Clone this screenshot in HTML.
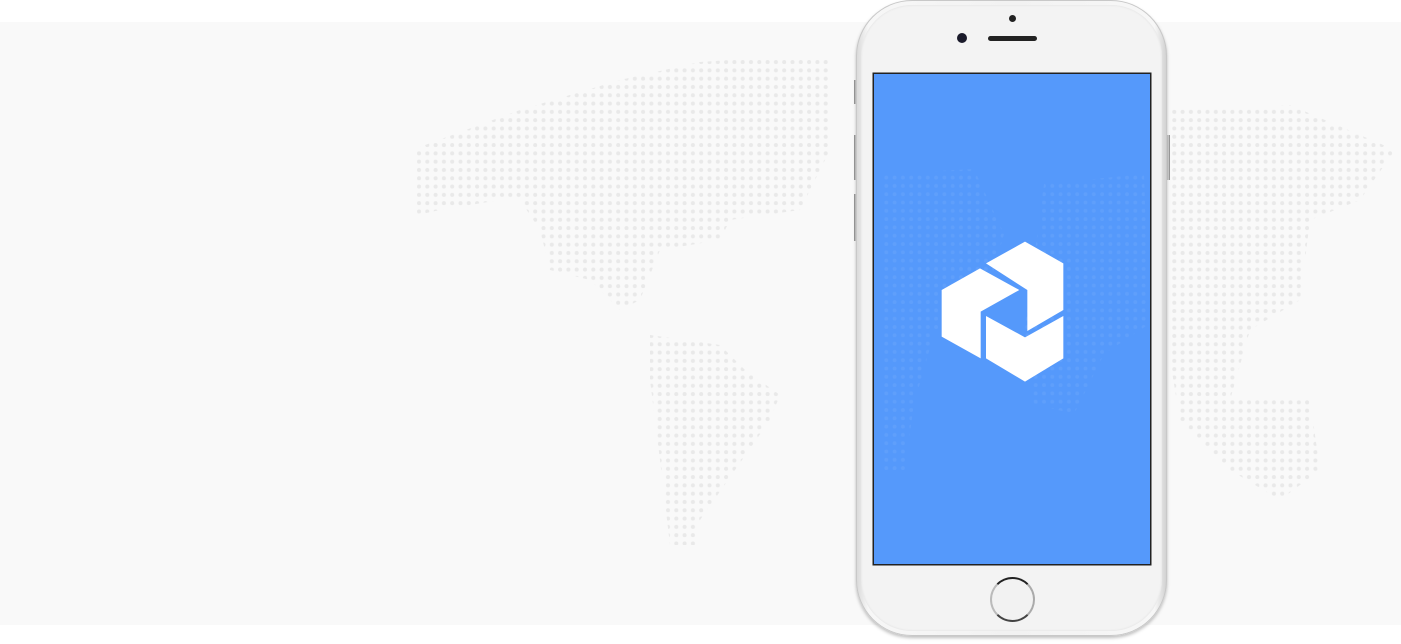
<!DOCTYPE html>
<html><head><style>
html,body{margin:0;padding:0;width:1401px;height:644px;overflow:hidden;background:#fff;font-family:"Liberation Sans",sans-serif}
.band{position:absolute;left:0;top:22px;width:1401px;height:603px;background:#f9f9f9}
.phone{position:absolute;left:856px;top:0;width:311px;height:636px;border-radius:56px;background:linear-gradient(90deg,#d8d8d8,#f7f7f7 4%,#f2f2f2 50%,#f7f7f7 96%,#cfcfcf);box-shadow:0 2px 3px rgba(0,0,0,.25),inset 0 0 0 1px #c8c8c8}
.inner{position:absolute;left:5px;top:5px;right:5px;bottom:5px;border-radius:51px;background:#f3f3f3;box-shadow:inset 0 0 2px #ddd}
.screen{position:absolute;left:874px;top:74px;width:276px;height:490px;background:#5599fb;box-shadow:0 0 0 1.5px #222}
.btn{position:absolute;width:3px;background:#ccc;border-left:1px solid #999}
.home{position:absolute;left:990px;top:577px;width:45px;height:45px;border-radius:50%;border:2px solid #444;border-top-color:#222;border-left-color:#bbb;border-right-color:#aaa;box-sizing:border-box;background:#f2f2f2}
</style></head><body>
<div class="band"></div>
<svg style="position:absolute;left:0;top:0" width="1401" height="644">
<defs>
<pattern id="d" width="8.3" height="8.3" patternUnits="userSpaceOnUse"><circle cx="4" cy="4" r="2" fill="#e9e9e9"/></pattern>
<pattern id="d2" width="8.3" height="8.3" patternUnits="userSpaceOnUse"><circle cx="4" cy="4" r="1.9" fill="#5f9ffb"/></pattern>
</defs>
<polygon fill="url(#d)" points="417,148 520,110 620,80 700,62 790,56 830,60 830,150 800,210 730,220 720,240 660,250 640,300 620,310 590,280 550,270 540,230 520,200 500,200 440,210 417,215"/>
<polygon fill="url(#d)" points="650,335 720,345 745,370 780,395 770,420 735,470 700,520 695,545 670,545 660,460 650,380"/>
<polygon fill="url(#d)" points="1170,110 1290,105 1395,150 1360,200 1310,220 1300,300 1250,330 1230,400 1310,400 1320,470 1280,500 1230,470 1180,420 1170,360"/>
</svg>
<div class="btn" style="left:854px;top:80px;height:24px"></div>
<div class="btn" style="left:854px;top:135px;height:45px"></div>
<div class="btn" style="left:854px;top:194px;height:47px"></div>
<div class="btn" style="left:1166px;top:135px;height:45px;border-left:none;border-right:1px solid #999"></div>
<div class="phone"><div class="inner"></div></div>
<div style="position:absolute;left:1009px;top:15px;width:7px;height:7px;border-radius:50%;background:#222"></div>
<div style="position:absolute;left:957px;top:33px;width:10px;height:10px;border-radius:50%;background:#1a1a2a"></div>
<div style="position:absolute;left:988px;top:36px;width:49px;height:5px;border-radius:3px;background:#222"></div>
<div class="screen"></div>
<svg style="position:absolute;left:874px;top:74px" width="276" height="490">
<polygon fill="url(#d2)" points="10,100 100,95 130,160 110,230 60,260 40,330 30,400 10,400"/>
<polygon fill="url(#d2)" points="170,110 270,100 275,250 230,280 200,340 160,330 150,260"/>
</svg>
<svg style="position:absolute;left:930px;top:230px" width="145" height="165" viewBox="0 0 435 495">
<g fill="#fff">
<polygon points="168,100 285,35 400,100 400,240 292,303 292,180"/>
<polygon points="35,180 150,115 268,180 152,245 152,385 35,320"/>
<polygon points="168,258 285,322 400,258 400,385 285,455 168,385"/>
</g>
</svg>
<div class="home"></div>
</body></html>
